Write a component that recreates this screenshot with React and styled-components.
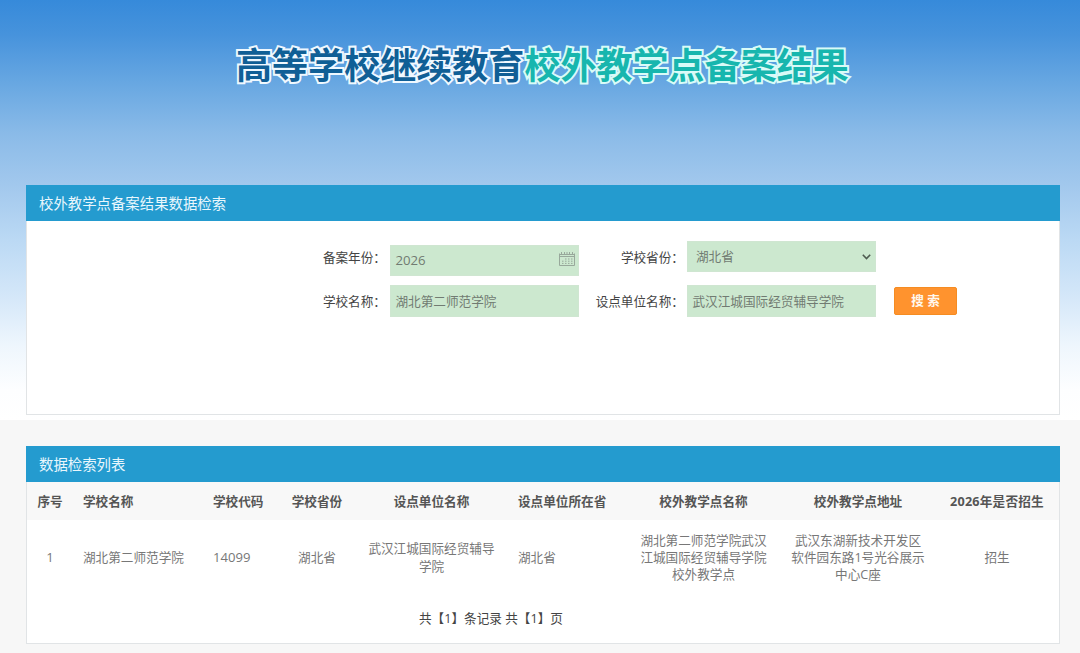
import React from "react";
import styled, { createGlobalStyle } from "styled-components";

const GlobalStyle = createGlobalStyle`
  * { box-sizing: border-box; }
  body {
    margin: 0;
    background: #f7f7f7;
    font-family: "Open Sans", "Noto Sans CJK SC", sans-serif;
    font-size: 12.63px;
    line-height: 17.2px;
    color: #444;
  }
`;

const Page = styled.div`
  height: 653px;
  overflow: hidden;
`;

const Hero = styled.header`
  height: 420px;
  padding: 0 20px 0 26px;
  background: linear-gradient(
    180deg,
    #368ada 0,
    #4793dc 35px,
    #69a8e2 85px,
    #8bbbe8 135px,
    #a2c8ed 185px,
    #bbd9f4 240px,
    #d6e8f9 300px,
    #eef6fd 345px,
    #fdfeff 390px,
    #fff 420px
  );
`;

const Title = styled.h1`
  height: 185px;
  margin: 0;
  padding: 38px 0 0 210px;
  font-size: 36.05px;
  line-height: 54px;
  font-weight: 700;
  white-space: nowrap;
`;

const TitlePart = styled.span`
  color: ${(p) => (p.$accent ? "#17b6ae" : "#105f96")};
  -webkit-text-stroke: 4px ${(p) => (p.$accent ? "#d9fbf8" : "#eff8ff")};
  paint-order: stroke fill;
`;

const Panel = styled.section`
  height: ${(p) => p.$height}px;
  background: #fff;
  border: 1px solid #e1e4e6;
  border-top: 0;
`;

const PanelHeader = styled.h2`
  height: 36px;
  margin: 0 -1px;
  padding: 1px 13px 0;
  background: #249bcf;
  color: #e9f7fd;
  font-size: 14.4px;
  font-weight: 400;
  line-height: 36px;
`;

const SearchForm = styled.form`
  display: grid;
  grid-template-columns: 363px 189px 108px 189px 82px;
  grid-template-rows: 35px 32px;
  row-gap: 9px;
  padding-top: 20px;
`;

const Label = styled.label`
  padding: 8px ${(p) => (p.$near ? 3 : 4)}px 0 0;
  text-align: right;
  white-space: nowrap;
`;

const Field = styled.div`
  display: flex;
  align-items: center;
  justify-content: space-between;
  align-self: ${(p) => (p.$low ? "end" : "start")};
  height: ${(p) => (p.$tall ? 32 : 31)}px;
  padding: ${(p) => (p.$low ? 0 : 1)}px ${(p) => (p.$low ? 3 : 4)}px 0 ${(p) => (p.$select ? 8 : 4.5)}px;
  background: #cce8cf;
  border: 1px solid #cfe6d1;
  color: #717b72;
  font-size: ${(p) => (p.$large ? 13.2 : 12.63)}px;
  white-space: nowrap;
`;

const SearchButton = styled.button`
  width: 63px;
  height: 28px;
  margin: 2px 0 0 18px;
  padding: 0;
  border: 1px solid #f58c22;
  border-radius: 2px;
  background: #ff932e;
  color: #fff8ee;
  font: 700 12.63px/26px "Open Sans", "Noto Sans CJK SC", sans-serif;
`;

const Results = styled.main`
  padding: 26px 20px 0 26px;
`;

const Table = styled.table`
  width: 1032px;
  table-layout: fixed;
  border-collapse: collapse;
`;

const HeadCell = styled.th`
  height: 38px;
  padding: 2px 0 0 ${(p) => (p.$left ? 10 : 0)}px;
  background: #f8f8f8;
  color: #555;
  font-weight: 700;
  letter-spacing: ${(p) => (p.$wide ? "0.2px" : "normal")};
  text-align: ${(p) => (p.$left ? "left" : "center")};
  white-space: nowrap;
`;

const Cell = styled.td`
  height: 75px;
  padding: 0 ${(p) => p.$inset || 8}px 0 ${(p) => (p.$left ? 10 : p.$inset || 8)}px;
  color: #777;
  font-size: ${(p) => (p.$numeric ? 13.1 : 12.63)}px;
  text-align: ${(p) => (p.$left ? "left" : "center")};
  vertical-align: middle;
`;

const Pagination = styled.div`
  padding: 15px 0 0 392px;
  white-space: nowrap;
`;

const Calendar = styled.svg`
  margin-bottom: 3px;
`;

const CalendarIcon = () => (
  <Calendar width="16" height="14" viewBox="0 0 16 14" fill="none" stroke="#98a89b" strokeWidth="1">
    <path d="M.5 1.5v12h15v-12M1 2.5h14M1 4.5h14M2.5 0v3M5.5 0v3M8 0v3M10.5 0v3M13.5 0v3" />
    <path d="M6 7h1.5m1.5 0h1.5m1.5 0h1.5M3 9.2h1.5M6 9.2h1.5m1.5 0h1.5m1.5 0h1.5M3 11.4h1.5m1.5 0h1.5m1.5 0h1.5m1.5 0h1.5" />
  </Calendar>
);

const ChevronIcon = () => (
  <svg width="9" height="6" viewBox="0 0 9 6" fill="none" stroke="#4e5b50" strokeWidth="1.6">
    <path d="M.8.8 4.5 4.5 8.2.8" />
  </svg>
);

const columns = [
  { title: "序号", value: "1", width: 46, numeric: true },
  { title: "学校名称", value: "湖北第二师范学院", width: 130, left: true },
  { title: "学校代码", value: "14099", width: 76, left: true, numeric: true },
  { title: "学校省份", value: "湖北省", width: 76 },
  { title: "设点单位名称", value: "武汉江城国际经贸辅导学院", width: 153 },
  { title: "设点单位所在省", value: "湖北省", width: 118, left: true },
  { title: "校外教学点名称", value: "湖北第二师范学院武汉江城国际经贸辅导学院校外教学点", width: 155, inset: 12 },
  { title: "校外教学点地址", value: "武汉东湖新技术开发区软件园东路1号光谷展示中心C座", width: 154 },
  { title: "2026年是否招生", value: "招生", width: 124, wide: true },
];

export default function App() {
  return (
    <Page>
      <GlobalStyle />
      <Hero>
        <Title>
          <TitlePart>高等学校继续教育</TitlePart>
          <TitlePart $accent>校外教学点备案结果</TitlePart>
        </Title>
        <Panel $height={230}>
          <PanelHeader>校外教学点备案结果数据检索</PanelHeader>
          <SearchForm>
            <Label>备案年份：</Label>
            <Field $low $large>2026<CalendarIcon /></Field>
            <Label $near>学校省份：</Label>
            <Field $select>湖北省<ChevronIcon /></Field>
            <span />
            <Label>学校名称：</Label>
            <Field $tall>湖北第二师范学院</Field>
            <Label $near>设点单位名称：</Label>
            <Field $tall>武汉江城国际经贸辅导学院</Field>
            <SearchButton type="button">搜 索</SearchButton>
          </SearchForm>
        </Panel>
      </Hero>
      <Results>
        <Panel $height={198}>
          <PanelHeader>数据检索列表</PanelHeader>
          <Table>
            <colgroup>
              {columns.map((c) => <col key={c.title} width={c.width} />)}
            </colgroup>
            <thead>
              <tr>
                {columns.map((c) => (
                  <HeadCell key={c.title} $left={c.left} $wide={c.wide}>{c.title}</HeadCell>
                ))}
              </tr>
            </thead>
            <tbody>
              <tr>
                {columns.map((c) => (
                  <Cell key={c.title} $left={c.left} $inset={c.inset} $numeric={c.numeric}>{c.value}</Cell>
                ))}
              </tr>
            </tbody>
          </Table>
          <Pagination>共【1】条记录 共【1】页</Pagination>
        </Panel>
      </Results>
    </Page>
  );
}
